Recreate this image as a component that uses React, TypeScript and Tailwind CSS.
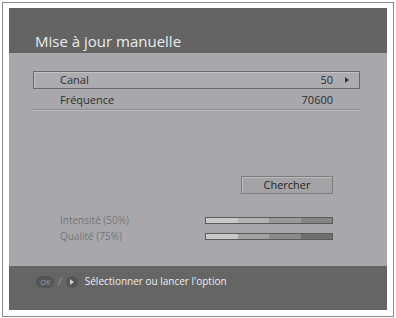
const Bar = ({ colors }: { colors: string[] }) => (
  <div className="flex w-[128px] h-[7px] border border-[#5a5a5a]">
    {colors.map((c, i) => (
      <div key={i} className="flex-1" style={{ backgroundColor: c }} />
    ))}
  </div>
);

export default function App() {
  return (
    <div className="w-[396px] h-[318px] bg-white p-[2px] font-['Open_Sans',sans-serif]">
      <div className="w-[392px] h-[315px] border border-[#8a8a8a] bg-white px-[6px] pt-[5px] pb-[6px]">
        <div className="flex flex-col h-full">
          {/* Header */}
          <div className="h-[45px] bg-[#646464] flex items-end pl-[26px] pb-[2px]">
            <span className="text-[15px] text-[#ececec] leading-[20px]">Mise à jour manuelle</span>
          </div>

          {/* Body */}
          <div className="flex-1 bg-[#a8a8ac] flex flex-col pt-[18px] pl-[24px] pr-[27px]">
            <div className="h-[18px] flex items-center border border-[#686868] bg-[#acacb0] shadow-[inset_1px_1px_0_#c4c4c6] text-[11px] text-[#2d2d2d]">
              <span className="pl-[26px] flex-1">Canal</span>
              <span>50</span>
              <span className="w-0 h-0 border-y-[3px] border-y-transparent border-l-[4px] border-l-[#3a3a3a] ml-[12px] mr-[10px]" />
            </div>
            <div className="h-[21px] pt-[2px] flex items-center text-[11px] text-[#2d2d2d] border-b border-[#8e8e90] shadow-[0_1px_0_#bdbdbf] -ml-[2px]">
              <span className="pl-[29px] flex-1">Fréquence</span>
              <span className="pr-[27px]">70600</span>
            </div>

            <div className="flex justify-end mt-[66px] pr-[27px]">
              <div className="w-[92px] h-[18px] flex items-center justify-center border border-[#7c7c7c] bg-[#a3a3a6] shadow-[inset_1px_1px_0_#bcbcbe] text-[11px] text-[#242424]">
                Chercher
              </div>
            </div>

            <div className="flex flex-col gap-[1px] mt-[19px] text-[10px] text-[#747478]">
              <div className="h-[15px] flex items-center justify-between pr-[27px]">
                <span className="pl-[27px]">Intensité (50%)</span>
                <Bar colors={['#c8c8ca', '#b3b3b5', '#9a9a9c', '#858587']} />
              </div>
              <div className="h-[15px] flex items-center justify-between pr-[27px]">
                <span className="pl-[27px]">Qualité (75%)</span>
                <Bar colors={['#c8c8ca', '#a2a2a4', '#8b8b8d', '#6e6e70']} />
              </div>
            </div>
          </div>

          {/* Footer */}
          <div className="h-[44px] bg-[#656565] flex items-start pt-[8px] pl-[27px] text-[10px] text-[#efefef]">
            <div className="flex items-center gap-[4px]">
              <span className="px-[4px] h-[12px] leading-[12px] rounded-full bg-[#555555] text-[8px] italic text-[#9a9a9a]">OK</span>
              <span className="text-[#9a9a9a] italic">/</span>
              <span className="w-[12px] h-[12px] rounded-full bg-[#555555] flex items-center justify-center">
                <span className="w-0 h-0 border-y-[3px] border-y-transparent border-l-[4px] border-l-[#cfcfcf] ml-[1px]" />
              </span>
              <span className="ml-[3px]">Sélectionner ou lancer l'option</span>
            </div>
          </div>
        </div>
      </div>
    </div>
  );
}
